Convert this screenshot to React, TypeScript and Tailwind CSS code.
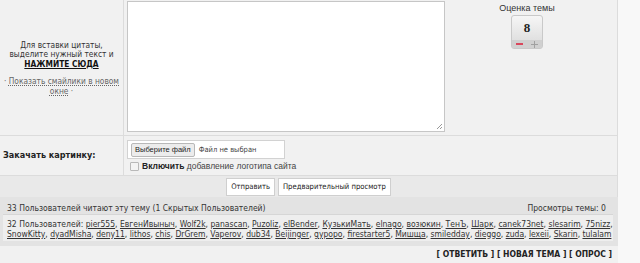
import React from 'react'

const users1 = ['pier555', 'ЕвгенИвыныч', 'Wolf2k', 'panascan', 'Puzoliz', 'elBender', 'КузькиМать', 'elnago', 'возюкин', 'ТенЪ', 'Шарк', 'canek73net', 'slesarim', '75nizz']
const users2 = ['SnowKitty', 'dyadMisha', 'deny11', 'lithos', 'chis', 'DrGrem', 'Vaperov', 'dub34', 'Beijinger', 'gypopo', 'firestarter5', 'Мишща', 'smiledday', 'dieggo', 'zuda', 'lexeii', 'Skarin', 'tulalam']

const cond = { fontFamily: '"DejaVu Sans Condensed", "DejaVu Sans", Verdana, sans-serif' }
const arial = { fontFamily: '"Liberation Sans", Arial, sans-serif' }

function Rating() {
  return (
    <div className="flex flex-col items-center">
      <div className="text-[9px] leading-[12px] mt-[2px] text-[#333]" style={arial}>Оценка темы</div>
      <div className="mt-[1px] w-[32px] h-[34px] rounded-[3px] border border-[#c9c9c9] bg-gradient-to-b from-[#f6f6f6] to-[#d9d9d9] flex flex-col overflow-hidden">
        <div className="flex-1 flex items-center justify-center text-[13px] font-bold text-[#222]" style={{ fontFamily: '"Liberation Serif", serif' }}>8</div>
        <div className="h-[8px] flex items-center justify-between px-[4px] bg-[#d0d0d0]">
          <span className="block w-[7px] h-[2px] bg-[#d9475c]" />
          <span className="relative block w-[7px] h-[7px]">
            <span className="absolute left-0 top-[3px] w-[7px] h-[1px] bg-[#a0a0a0]" />
            <span className="absolute left-[3px] top-0 w-[1px] h-[7px] bg-[#a0a0a0]" />
          </span>
        </div>
      </div>
    </div>
  )
}

export default function App() {
  return (
    <div className="w-[640px] h-[263px] overflow-hidden bg-[#f8f8f8] text-[#222]" style={cond}>
      <div className="w-[618px]">
        {/* post form */}
        <div className="border-r border-[#dcdcdc] bg-[#f1f1f1]">
          <div className="flex h-[136px] border-b border-[#dcdcdc]">
            <div className="w-[124px] border-r border-[#dcdcdc] flex flex-col items-center justify-center text-center text-[8.3px] leading-[9.5px] pt-[2px] text-[#333]">
              <div>Для вставки цитаты,</div>
              <div>выделите нужный текст и</div>
              <div className="font-bold underline text-[#111]">НАЖМИТЕ СЮДА</div>
              <div className="mt-[8px] text-[#666]">
                · <span className="underline decoration-dotted">Показать смайлики в новом</span>
              </div>
              <div className="text-[#666]">
                <span className="underline decoration-dotted">окне</span> ·
              </div>
            </div>
            <div className="w-[321px] pl-[3px] pt-[1px]">
              <div className="relative w-[318px] h-[131px] bg-white border border-[#c6c6c6]">
                <svg className="absolute right-[1px] bottom-[1px]" width="7" height="7" viewBox="0 0 7 7">
                  <path d="M6 1L1 6M6 4L4 6" stroke="#999" strokeWidth="1" />
                </svg>
              </div>
            </div>
            <div className="flex-1 flex justify-center pr-[8px]">
              <Rating />
            </div>
          </div>

          <div className="flex h-[40px] border-b border-[#dcdcdc]">
            <div className="w-[124px] border-r border-[#dcdcdc] flex items-center pl-[3px] text-[9px] font-bold text-[#222]">
              Закачать картинку:
            </div>
            <div className="flex flex-col pl-[3px] pt-[4px]">
              <div className="w-[158px] h-[19px] bg-white border border-[#d2d2d2] flex items-center pl-[3px] gap-[4px]">
                <div className="h-[14px] px-[3px] bg-[#ececec] border border-[#b8b8b8] rounded-[2px] flex items-center text-[7.5px] text-[#222]" style={arial}>Выберите файл</div>
                <span className="text-[7.5px] text-[#444]">Файл не выбран</span>
              </div>
              <div className="flex items-center mt-[1px] pl-[3px] gap-[3px] text-[#444]" style={arial}>
                <span className="block w-[9px] h-[9px] border border-[#b9b9b9] bg-[#f4f4f4] rounded-[1px]" />
                <span className="text-[8.5px]"><b className="text-[#222]">Включить</b> добавление логотипа сайта</span>
              </div>
            </div>
          </div>

          <div className="h-[21px] bg-[#e9e9e9] flex items-center justify-center gap-[3px]">
            <button className="h-[18px] px-[4px] bg-white border border-[#cfcfcf] text-[7.6px] text-[#222]" style={cond}>Отправить</button>
            <button className="h-[18px] px-[4px] bg-white border border-[#cfcfcf] text-[7.6px] text-[#222]" style={cond}>Предварительный просмотр</button>
          </div>
        </div>

        {/* who reads */}
        <div className="bg-[#e3e3e3] pr-[5px]">
          <div className="h-[17px] flex items-center justify-between pt-[5px] px-[7px] text-[8.5px] text-[#333]">
            <span>33 Пользователей читают эту тему (1 Скрытых Пользователей)</span>
            <span>Просмотры темы: 0</span>
          </div>
          <div className="ml-[3px] bg-[#eeeeee] border-t border-[#d6d6d6] px-[4px] pt-[4px] pb-[2px] text-[8.5px] leading-[10px] text-[#333] whitespace-nowrap">
            <div>
              32 Пользователей:{' '}
              {users1.map((u, i) => (
                <span key={u}>
                  <a className="underline text-[#333]">{u}</a>
                  {i < users1.length - 1 ? ', ' : ','}
                </span>
              ))}
            </div>
            <div>
              {users2.map((u, i) => (
                <span key={u}>
                  <a className="underline text-[#333]">{u}</a>
                  {i < users2.length - 1 ? ', ' : ''}
                </span>
              ))}
            </div>
          </div>
          <div className="h-[5px]" />
        </div>
        <div className="h-[17px] flex items-center justify-end pr-[6px] text-[8.5px] font-bold text-[#222] bg-[#f1f1f1]">
          [ ОТВЕТИТЬ ] [ НОВАЯ ТЕМА ] [ ОПРОС ]
        </div>
      </div>
    </div>
  )
}
